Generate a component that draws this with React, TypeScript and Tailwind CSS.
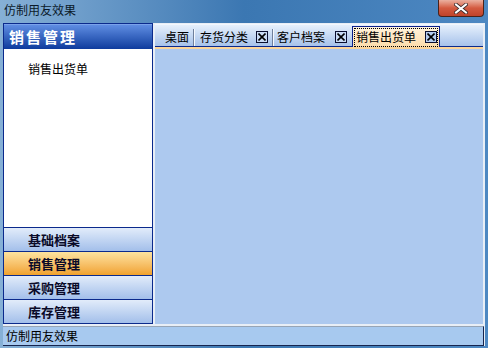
import React from "react";

function XBox({ active }: { active?: boolean }) {
  return (
    <div
      className={`w-[12px] h-[12px] border border-[#0a0f30] flex items-center justify-center ${
        active ? "bg-[#b6cdf0]" : "bg-[#c9dbf5]"
      }`}
    >
      <svg width="8" height="8" viewBox="0 0 8 8">
        <path d="M0.5 0.5 L7.5 7.5 M7.5 0.5 L0.5 7.5" stroke="#000" strokeWidth="1.6" />
      </svg>
    </div>
  );
}

function Sep() {
  return (
    <div className="flex h-[17px] self-center mt-[2px]">
      <div className="w-[1px] bg-[#6f7f9c]" />
      <div className="w-[1px] bg-[#f4f8fe]" />
    </div>
  );
}

export default function App() {
  const font = { fontFamily: '"Noto Sans CJK SC", "Noto Sans", sans-serif' };
  return (
    <div
      className="w-[488px] h-[348px] relative overflow-hidden flex flex-col bg-gradient-to-r from-[#86b0d6] via-[#3b77b2] to-[#4d88c2]"
      style={font}
    >
      {/* title bar */}
      <div className="h-[23px] flex items-center pl-[4px] text-[12px] leading-[14px] text-[#0b1a2a] pb-[3px]">
        仿制用友效果
      </div>
      <div className="absolute right-[4px] top-0 w-[46px] h-[17px] rounded-b-[4px] border border-t-0 border-[#4b2219] bg-gradient-to-b from-[#eab0a0] via-[#d35a40] to-[#c0432a] flex items-center justify-center">
        <svg width="14" height="11" viewBox="0 0 14 11">
          <path d="M2 1.5 L12 9.5 M12 1.5 L2 9.5" stroke="#3a2a2a" strokeWidth="3.6" strokeLinecap="square" />
          <path d="M2 1.5 L12 9.5 M12 1.5 L2 9.5" stroke="#ffffff" strokeWidth="2" strokeLinecap="square" />
        </svg>
      </div>

      {/* body */}
      <div className="mx-[3px] h-[302px] bg-[#e8eef6] flex">
        {/* left panel */}
        <div className="w-[150px] h-[301px] border border-[#0b2a8c] flex flex-col bg-white">
          <div className="h-[25px] bg-gradient-to-b from-[#5f8de2] to-[#0e3b9d] border-t border-[#7aa2ea] flex items-center pl-[5px] text-white font-bold text-[15px] tracking-[2px] leading-[16px]">
            销售管理
          </div>
          <div className="h-[178px] bg-white pt-[13px] pl-[24px] text-[12px] leading-[14px] text-black">
            销售出货单
          </div>
          {[
            { t: "基础档案", a: false },
            { t: "销售管理", a: true },
            { t: "采购管理", a: false },
            { t: "库存管理", a: false },
          ].map((b) => (
            <div
              key={b.t}
              className={`h-[24px] border-t border-[#0b2a8c] flex items-center pl-[24px] font-bold text-[13px] leading-[14px] text-[#0a0a28] ${
                b.a
                  ? "bg-gradient-to-b from-[#fde39e] to-[#f0a22a]"
                  : "bg-gradient-to-b from-[#e2ecfa] to-[#a3bfea]"
              }`}
            >
              {b.t}
            </div>
          ))}
        </div>

        {/* right panel */}
        <div className="ml-[2px] mr-[2px] mt-[1px] flex-1 h-[300px] flex flex-col">
          <div className="h-[23px] border-b border-[#0b2a8c] bg-gradient-to-b from-[#e6f0fc] to-[#a7c2ea] border-t border-t-[#f2f7fe] flex items-end pl-[10px] text-[12px] leading-[14px] text-black">
            <div className="h-[19px] flex items-center">桌面</div>
            <div className="ml-[4px] flex items-end h-[19px]">
              <Sep />
            </div>
            <div className="ml-[5px] h-[19px] flex items-center">存货分类</div>
            <div className="ml-[8px] h-[19px] flex items-center">
              <XBox />
            </div>
            <div className="ml-[4px] flex items-end h-[19px]">
              <Sep />
            </div>
            <div className="ml-[3px] h-[19px] flex items-center">客户档案</div>
            <div className="ml-[10px] h-[19px] flex items-center">
              <XBox />
            </div>
            <div className="ml-[5px] relative h-[21px] -mb-[1px] border border-b-0 border-[#0a1f8c] bg-gradient-to-b from-[#fff3dc] to-[#fcdcaa] flex items-center pl-[3px] pr-[2px]">
              <div className="absolute left-[1px] right-[1px] top-[1px] bottom-0 border border-dotted border-[#000]" />
              <span className="relative">销售出货单</span>
              <div className="relative ml-[9px]">
                <XBox active />
              </div>
            </div>
          </div>
          <div className="h-[2px] bg-[#fbd49a]" />
          <div className="flex-1 bg-[#adc9ef]" />
        </div>
      </div>

      {/* status bar */}
      <div className="mx-[3px] h-[21px] bg-[#e8eef6] pt-[1px] pr-[1px]">
        <div className="h-[20px] border-t border-b border-r border-t-[#97a5b6] border-b-[#16244e] border-r-[#16244e] bg-[#a7c9ef] flex items-center pl-[3px] text-[12px] leading-[14px] text-black">
          仿制用友效果
        </div>
      </div>
      <div className="h-[2px]" />
    </div>
  );
}
